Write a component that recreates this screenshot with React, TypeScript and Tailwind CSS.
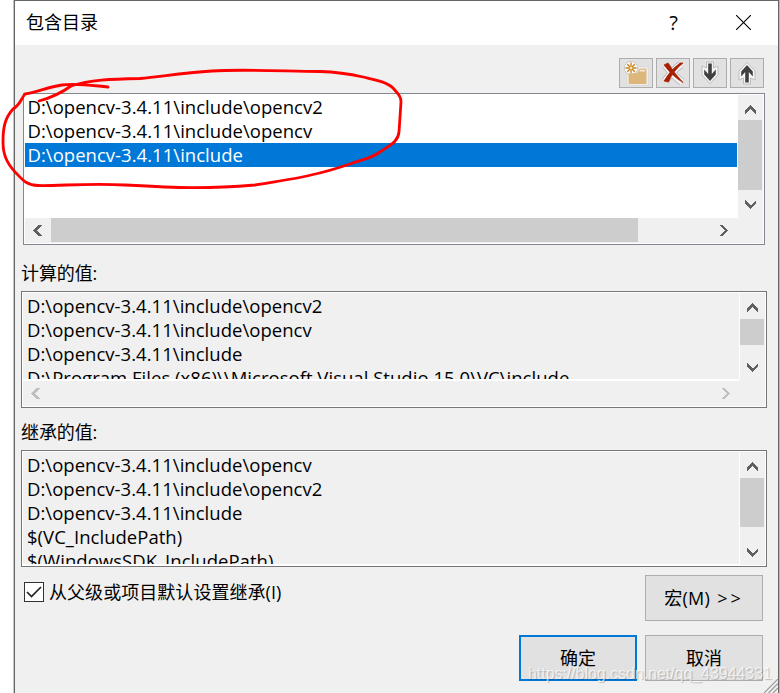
import type { ReactNode } from "react";
import clsx from "clsx";

const projectPaths = [
  "D:\\opencv-3.4.11\\include\\opencv2",
  "D:\\opencv-3.4.11\\include\\opencv",
  "D:\\opencv-3.4.11\\include",
];

const evaluatedPaths = [...projectPaths, "D:\\Program Files (x86)\\\\Microsoft Visual Studio 15.0\\VC\\include"];

const inheritedPaths = [
  "D:\\opencv-3.4.11\\include\\opencv",
  "D:\\opencv-3.4.11\\include\\opencv2",
  "D:\\opencv-3.4.11\\include",
  "$(VC_IncludePath)",
  "$(WindowsSDK_IncludePath)",
];

const chevrons = {
  up: "M0 6 5.5 0 11 6V9.5L5.5 4 0 9.5Z",
  down: "M0 3.5 5.5 9.5 11 3.5V0L5.5 5.5 0 0Z",
  left: "M6 0 0 5.5 6 11H9.5L4 5.5 9.5 0Z",
  right: "M3.5 0 9.5 5.5 3.5 11H0L5.5 5.5 0 0Z",
};

function Chevron({ dir, disabled }: { dir: keyof typeof chevrons; disabled?: boolean }) {
  const vertical = dir === "up" || dir === "down";
  return (
    <svg
      width={vertical ? 11 : 9}
      height={vertical ? 9 : 11}
      shapeRendering="crispEdges"
      className={clsx("block shrink-0", disabled ? "fill-[#bfbfbf]" : "fill-[#606060]")}
    >
      <path d={chevrons[dir]} />
    </svg>
  );
}

function VScroll({ thumb, upButton, className }: { thumb: string; upButton: string; className?: string }) {
  return (
    <div className={clsx("flex w-[25px] shrink-0 flex-col bg-[#f0f0f0]", className)}>
      <div className={clsx("flex shrink-0 justify-center pt-[10px]", upButton)}>
        <Chevron dir="up" />
      </div>
      <div className={clsx("w-6 shrink-0 bg-[#cdcdcd]", thumb)} />
      <div className="flex flex-1 items-end justify-center">
        <Chevron dir="down" />
      </div>
    </div>
  );
}

function PathRows({ paths, selected }: { paths: string[]; selected?: number }) {
  return (
    <>
      {paths.map((path, i) => (
        <div
          key={i}
          className={clsx(
            "h-6 shrink-0 whitespace-pre pl-[2.5px] text-[18.5px] leading-6 tracking-[0.03px]",
            i === selected && "bg-[#0078d7] text-white"
          )}
        >
          {path}
        </div>
      ))}
    </>
  );
}

function ToolButton({ children }: { children: ReactNode }) {
  return (
    <button className="flex h-[30px] w-[34px] items-center justify-center border border-[#adadad] bg-[#e1e1e1]">
      {children}
    </button>
  );
}

function DialogButton({ children, primary }: { children: ReactNode; primary?: boolean }) {
  return (
    <button
      className={clsx(
        "flex h-[46px] w-[118px] items-center justify-center whitespace-pre bg-[#e1e1e1]",
        primary ? "border-2 border-[#0078d7]" : "border border-[#adadad]"
      )}
    >
      {children}
    </button>
  );
}

function MoveArrow({ up }: { up?: boolean }) {
  return (
    <svg width="18" height="24" viewBox="0 0 18 24" className={clsx(up && "rotate-180")}>
      <path d="M5.5 1H12.5V7L17 5V14L9 22.5 1 14V5L5.5 7Z" fill="#f6f6f6" stroke="#bdbdbd" />
      <path d="M7.200 2.5H10.800V13L14.800 8.5V13.5L9 20 3.200 13.5V8.5L7.200 13Z" fill="#404040" />
    </svg>
  );
}

function Toolbar() {
  return (
    <div className="flex justify-end gap-[3px] pr-[14px] pt-[13px]">
      <ToolButton>
        <svg width="26" height="26" viewBox="0 0 26 26">
          <path d="M4 12H14L16 7H25V25H4Z" fill="#f8f8f8" stroke="#d0d0d0" strokeWidth=".6" />
          <circle cx="8" cy="8" r="6.6" fill="#f8f8f8" stroke="#c4c4c4" strokeWidth=".9" />
          <path d="M5.5 13H14L16.500 8.5H23.500V24H5.500Z" fill="#dcb67a" />
          <path d="M16 11.5 17.500 9.7H22V11.5Z" fill="#f7ead5" />
          <circle cx="8" cy="8" r="5.8" fill="#f8f8f8" />
          <path d="M8 2.5V13.5M2.5 8H13.5M4.300 4.300 11.700 11.700M11.700 4.300 4.300 11.700" stroke="#c88118" strokeWidth="1.3" />
          <circle cx="8" cy="8" r="1.5" fill="#f8e0b8" />
        </svg>
      </ToolButton>
      <ToolButton>
        <svg width="26" height="26" viewBox="0 0 26 26" fill="none" strokeLinejoin="round">
          <path d="M5 5C9 9 15 17 22 22M21 4.5C14 9 9 16 5 21" stroke="#b5b5b5" strokeWidth="7.5" />
          <path d="M5 5C9 9 15 17 22 22M21 4.5C14 9 9 16 5 21" stroke="#f6f6f6" strokeWidth="6" />
          <path d="M4 5 8 3Q14 13 23 22.5Q13 17 4 5ZM20 3H23Q13 11 8.5 22L4 21Q10 10 20 3Z" fill="#a82000" stroke="#a82000" strokeWidth=".7" />
        </svg>
      </ToolButton>
      <ToolButton>
        <MoveArrow />
      </ToolButton>
      <ToolButton>
        <MoveArrow up />
      </ToolButton>
    </div>
  );
}

export default function App() {
  return (
    <div className="relative h-[693px] w-[780px] overflow-hidden bg-white pl-[13px] font-['Open_Sans','Noto_Sans_CJK_SC',sans-serif] text-[18px] text-black">
      <div className="flex h-full flex-col border-x border-[#c4c4c4] border-r-[#b8b8b8]">
        <div className="flex h-full flex-col border-x border-t border-[#666] bg-[#f0f0f0]">
          <header className="flex h-11 shrink-0 items-center bg-white pb-px pl-[11px]">
            <h1 className="flex-1">包含目录</h1>
            <span className="mr-[58px] text-[20px]">?</span>
            <svg width="15" height="15" className="mr-[27px]" stroke="#000" strokeWidth="1.1">
              <path d="M0 0 15 15M15 0 0 15" />
            </svg>
          </header>

          <Toolbar />

          {/* Editable list */}
          <div className="ml-2 mt-[5px] flex h-[152px] w-[742px] shrink-0 flex-col border border-[#828790] bg-white p-px">
            <div className="flex h-[123px]">
              <div className="w-[712px]">
                <PathRows paths={projectPaths} selected={2} />
              </div>
              <VScroll upButton="h-[25px]" thumb="h-[70px]" className="ml-px pb-[9px]" />
            </div>
            <div className="flex h-[25px] w-[738px] items-center bg-[#f0f0f0]">
              <div className="flex w-[26px] justify-center pr-px">
                <Chevron dir="left" />
              </div>
              <div className="h-6 w-[587px] self-start bg-[#cdcdcd]" />
              <div className="ml-[81px]">
                <Chevron dir="right" />
              </div>
            </div>
          </div>

          <label className="ml-1.5 mt-4 block h-[30px] leading-6 tracking-[-0.1px]">计算的值:</label>
          <div className="ml-1.5 flex h-[117px] w-[746px] shrink-0 flex-col border border-[#767676] bg-white p-px">
            <div className="flex h-[87px] w-[742px]">
              <div className="h-[86px] w-[716px] overflow-hidden bg-[#f0f0f0] pl-[1.5px] pt-px">
                <PathRows paths={evaluatedPaths} />
              </div>
              <VScroll upButton="h-[26px]" thumb="h-[26px]" className="ml-px pb-2" />
            </div>
            <div className="flex h-[26px] w-[742px] bg-[#f0f0f0]">
              <div className="flex h-[26px] w-[716px] items-center justify-between border-t border-white pl-2 pr-[9px]">
                <Chevron dir="left" disabled />
                <Chevron dir="right" disabled />
              </div>
            </div>
          </div>

          <label className="ml-1.5 mt-3 block h-[30px] leading-6 tracking-[-0.1px]">继承的值:</label>
          <div className="ml-1.5 flex h-[117px] w-[746px] shrink-0 border border-[#767676] bg-white p-px">
            <div className="h-[112px] w-[716px] overflow-hidden bg-[#f0f0f0] pl-[1.5px] pt-px">
              <PathRows paths={inheritedPaths} />
            </div>
            <VScroll upButton="h-[26px]" thumb="h-[49px]" className="ml-px pb-2" />
          </div>

          {/* Footer */}
          <div className="flex justify-between pl-[9px] pr-[15px] pt-2">
            <label className="flex h-[34px] items-center gap-[5px] tracking-[0.05px]">
              <span className="flex size-5 items-center justify-center border border-[#333] bg-white">
                <svg width="16" height="14" fill="none" stroke="#222" strokeWidth="1.7">
                  <path d="M1 7 5.5 11.5 15 2" />
                </svg>
              </span>
              从父级或项目默认设置继承(I)
            </label>
            <DialogButton>
              <span className="tracking-[0.3px]">宏(M) </span>
              <span className="ml-0.5 tracking-[3px]">&gt;&gt;</span>
            </DialogButton>
          </div>
          <div className="flex justify-end gap-2 pr-[15px] pt-[14px]">
            <DialogButton primary>确定</DialogButton>
            <DialogButton>取消</DialogButton>
          </div>
        </div>
      </div>

      {/* Resize grip */}
      <svg className="absolute bottom-0 right-0.5" width="14" height="14" fill="none" stroke="#999" strokeWidth="1.2">
        <path d="M0 14 14 0M4.5 14 14 4.5M9 14 14 9" />
      </svg>

      {/* Hand-drawn marker around the list */}
      <svg className="absolute left-0 top-0" width="420" height="200" fill="none" stroke="#f00" strokeWidth="2.8" strokeLinecap="round" strokeLinejoin="round">
        <path d="M108 87C88 85 76 83 62 85C47 87 39 92 25 94C21 99 20 105 13 109C5 118 3 127 3 142C3 155 7 163 15 172C23 180 26 185 38 185.5C60 186 88 183 125 185C180 188 205 189 255 185C280 181 300 178 311 175C326 172 338 168 350 164C363 159 370 159 380 152C390 145 398 142 399 132L401 102C401 96 398 94 393 88C387 82 376 80 363 77C350 74 340 72 320 71.5C280 71 240 69 212 71C180 73 160 77 140 78.5C110 79 90 80 71 86C60 94 50 98 39 101" />
      </svg>

      <div className="absolute bottom-[7px] left-[528px] whitespace-nowrap font-['Liberation_Sans',sans-serif] text-[16px] leading-6 tracking-[-0.05px] text-white/70 [text-shadow:1px_1px_1px_#00000038]">
        https://blog.csdn.net/qq_43944331
      </div>
    </div>
  );
}
